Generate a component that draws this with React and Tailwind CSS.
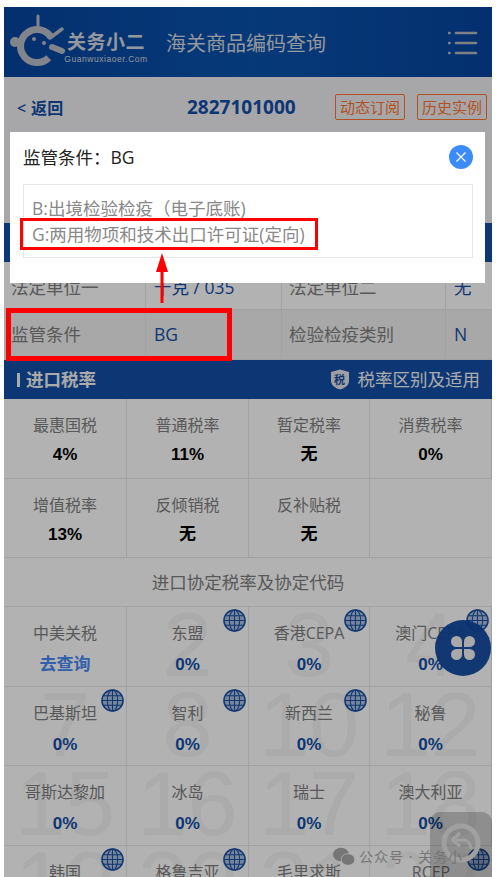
import React from "react";

const SANS = "font-['Open_Sans','Noto_Sans_CJK_SC',sans-serif]";

const BASE_ROW_1 = [
  { label: "最惠国税", value: "4%" },
  { label: "普通税率", value: "11%" },
  { label: "暂定税率", value: "无" },
  { label: "消费税率", value: "0%" },
];

const BASE_ROW_2 = [
  { label: "增值税率", value: "13%" },
  { label: "反倾销税", value: "无" },
  { label: "反补贴税", value: "无" },
  { label: "", value: "" },
];

const AGREEMENTS = [
  { label: "中美关税", value: "去查询", link: true },
  { label: "东盟", value: "0%", no: "2", globe: true },
  { label: "香港CEPA", value: "0%", no: "3", globe: true },
  { label: "澳门CEPA", value: "0%", no: "4", globe: true },
  { label: "巴基斯坦", value: "0%", no: "7", globe: true },
  { label: "智利", value: "0%", no: "8", globe: true },
  { label: "新西兰", value: "0%", no: "10", globe: true },
  { label: "秘鲁", value: "0%", no: "12" },
  { label: "哥斯达黎加", value: "0%", no: "15" },
  { label: "冰岛", value: "0%", no: "16" },
  { label: "瑞士", value: "0%", no: "17" },
  { label: "澳大利亚", value: "0%", no: "18" },
  { label: "韩国", value: "", no: "19", globe: true },
  { label: "格鲁吉亚", value: "", no: "20", globe: true },
  { label: "毛里求斯", value: "", no: "21" },
  { label: "RCEP", value: "", no: "22", globe: true },
];

function Logo() {
  return (
    <svg width="56" height="60" viewBox="0 0 56 60" className="shrink-0" fill="none">
      <path d="M41.3 25.7 A16.5 16.5 0 1 0 38.7 45.7" stroke="#b9bec7" strokeWidth="7" />
      <circle cx="5" cy="30" r="5" fill="#b9bec7" />
      <path d="M28 4 V16" stroke="#b9bec7" strokeWidth="3" strokeLinecap="round" />
      <path d="M40 26 L52 17" stroke="#b9bec7" strokeWidth="3.5" strokeLinecap="round" />
      <path d="M42 35 L52 39" stroke="#b9bec7" strokeWidth="6" strokeLinecap="round" />
      <circle cx="24" cy="27" r="2" fill="#b9bec7" />
      <circle cx="34" cy="31" r="2" fill="#b9bec7" />
    </svg>
  );
}

function MenuIcon() {
  return (
    <svg width="30" height="24" viewBox="0 0 30 24" fill="none" stroke="#b4b8c0" strokeWidth="2.6" strokeLinecap="round">
      <path d="M1 2h.6M8 2h20M1 12h.6M8 12h20M1 22h.6M8 22h20" />
    </svg>
  );
}

function Globe() {
  return (
    <svg width="23" height="23" viewBox="0 0 24 24" fill="#a9bfdf" stroke="#1a4fa3" className="absolute right-[2px] top-[2px]">
      <circle cx="12" cy="12" r="11" strokeWidth="1.6" />
      <g fill="none" strokeWidth="1.1">
        <ellipse cx="12" cy="12" rx="5.4" ry="11" />
        <path d="M12 1v22M1 12h22M2.6 7h18.8M2.6 17h18.8" />
      </g>
    </svg>
  );
}

function Shield() {
  return (
    <span className="relative flex h-[21px] w-[20px] items-center justify-center">
      <svg width="20" height="21" viewBox="0 0 20 21" className="absolute inset-0">
        <path d="M10 0.5 L19 3 V12 C19 16.5 14 19.5 10 20.5 C6 19.5 1 16.5 1 12 V3 Z" fill="#e2e4e8" />
      </svg>
      <span className="relative text-[11px] font-bold leading-none text-[#144fa7]">税</span>
    </span>
  );
}

function RateCell({ label, value }) {
  return (
    <div className="flex h-[79.5px] flex-col items-center border-r border-b border-[#e8e8e8] pt-[14px] last:border-r-0">
      <span className="text-[16px] leading-[24px] text-[#808080]">{label}</span>
      <span className="mt-[6px] font-['Liberation_Sans','Noto_Sans_CJK_SC',sans-serif] text-[17px] font-bold leading-[24px] text-black">{value}</span>
    </div>
  );
}

function AgreementCell({ item }) {
  return (
    <div className="relative flex h-[79.5px] flex-col items-center overflow-hidden border-r border-b border-[#e8e8e8] pt-[14px] last:border-r-0">
      {item.no && (
        <span className="absolute inset-x-0 top-[-7px] text-center font-['Liberation_Sans',sans-serif] text-[90px] leading-[90px] text-[#f5f5f5]">
          {item.no}
        </span>
      )}
      {item.globe && <Globe />}
      <span className="relative text-[16px] leading-[24px] text-[#808080]">{item.label}</span>
      <span
        className={`relative mt-[8px] font-['Liberation_Sans','Noto_Sans_CJK_SC',sans-serif] text-[17px] font-bold leading-[24px] ${
          item.link ? "text-[#4a8af4]" : "text-[#144fa7]"
        }`}
      >
        {item.value}
      </span>
    </div>
  );
}

function Row({ cells, className = "", height, inner = "" }) {
  return (
    <div className={`grid grid-cols-[142px_136px_164px_46px] border-b border-[#e8e8e8] text-[17.5px] ${height} ${className}`}>
      {cells.map((c, i) => (
        <div
          key={i}
          className={`flex items-center border-r border-[#e8e8e8] last:border-r-0 ${inner} ${i % 2 ? "pl-[8px] text-[#144fa7]" : "pl-[7px] text-[#808080]"}`}
        >
          {c}
        </div>
      ))}
    </div>
  );
}

export default function App() {
  return (
    <div className={`relative h-[877px] w-[497px] overflow-hidden bg-white pt-[7px] pl-[4px] pr-[5px] ${SANS}`}>
      <div className="w-[488px]">
        <div className="flex h-[70px] items-center bg-gradient-to-r from-[#0745a0] via-[#0a52ad] to-[#0745a0] pl-[6px] pr-[14px]">
          <Logo />
          <div className="mt-[12px] flex w-[80px] flex-col items-center text-[#d5d8de]">
            <span className="text-[19px] font-semibold leading-[22px] tracking-[0.5px]">关务小二</span>
            <span className="font-['Liberation_Sans',sans-serif] text-[8.5px] leading-[12px] tracking-[0.55px]">Guanwuxiaoer.Com</span>
          </div>
          <span className="ml-[20px] mt-[3px] text-[20px] text-[#d5d8de]">海关商品编码查询</span>
          <div className="ml-auto mt-[2px]">
            <MenuIcon />
          </div>
        </div>

        <div className="flex h-[60px] items-start bg-[#f0f0f2] pl-[13px] pr-[5px] pt-[17px]">
          <span className="w-[90px] text-[16px] font-semibold leading-[28px] tracking-[0.3px] text-[#144fa7]">&lt; 返回</span>
          <span className="ml-[80px] text-[19px] font-bold leading-[26px] text-[#144fa7]">2827101000</span>
          <span className="ml-auto flex h-[26px] w-[70px] items-center justify-center rounded-[2px] border border-[#ff7430] text-[15px] text-[#ff7430]">动态订阅</span>
          <span className="ml-[12px] flex h-[26px] w-[70px] items-center justify-center rounded-[2px] border border-[#ff7430] text-[15px] text-[#ff7430]">历史实例</span>
        </div>

        <div className="h-[86px] bg-[#f0f0f2]" />

        <div className="h-[39px] bg-[#144fa7]" />

        <Row cells={["法定单位一", "千克 / 035", "法定单位二", "无"]} height="h-[48px]" inner="pt-[4px]" className="bg-white" />
        <Row cells={["监管条件", "BG", "检验检疫类别", "N"]} height="h-[50px]" className="bg-[#f1f1f1]" />

        <div className="flex h-[39px] items-center bg-[#144fa7] pl-[13px] pr-[12px] text-[17.5px] text-[#f4f4f4]">
          <span className="mr-[6px] h-[14px] w-[3px] bg-[#f4f4f4]" />
          <span className="font-bold">进口税率</span>
          <span className="ml-auto flex items-center gap-[8px]">
            <Shield />
            税率区别及适用
          </span>
        </div>

        <div className="grid grid-cols-[123px_122px_121px_122px]">
          {BASE_ROW_1.map((c) => (
            <RateCell key={c.label} {...c} />
          ))}
          {BASE_ROW_2.map((c, i) => (
            <RateCell key={i} {...c} />
          ))}
        </div>

        <div className="flex h-[49px] items-center justify-center border-b border-[#e8e8e8] text-[17.5px] text-[#808080]">
          进口协定税率及协定代码
        </div>

        <div className="grid grid-cols-[123px_122px_121px_122px]">
          {AGREEMENTS.map((item) => (
            <AgreementCell key={item.label} item={item} />
          ))}
        </div>
      </div>

      {/* floating buttons under the mask */}
      <div className="absolute left-[435px] top-[620px] flex h-[56px] w-[56px] items-center justify-center rounded-full bg-[#0f48a0]/95">
        <svg width="26" height="26" viewBox="0 0 26 26" fill="#f2f2f2">
          <path d="M12 12H6.5A5.5 5.5 0 1 1 12 6.5ZM14 12V6.5A5.5 5.5 0 1 1 19.5 12ZM12 14V19.5A5.5 5.5 0 1 1 6.5 14ZM14 14H19.5A5.5 5.5 0 1 1 14 19.5Z" />
        </svg>
      </div>
      <div className="absolute left-[430px] top-[812px] flex h-[65px] w-[62px] items-start justify-center rounded-t-[10px] bg-black/20 pt-[11px]">
        <svg width="40" height="40" viewBox="0 0 40 40" fill="none" stroke="#e5e5e5" strokeWidth="5">
          <circle cx="20" cy="20" r="17" />
          <path d="M11 17 L19 10 M11 17 L19 23 M11 17 H22 C27 17 30 21 30 26" strokeWidth="3" />
        </svg>
      </div>

      {/* page mask */}
      <div className="absolute bottom-0 left-[4px] top-[7px] w-[488px] bg-black/30" />

      {/* dialog */}
      <div className="absolute left-[10px] top-[132px] h-[151px] w-[475px] bg-white pl-[13px] pr-[12px] pt-[12px]">
        <div className="flex h-[26px] items-center justify-between">
          <span className="text-[17.5px] leading-[26px] text-[#222]">监管条件：BG</span>
          <span className="flex h-[24px] w-[24px] items-center justify-center rounded-full bg-[#3b8bf8]">
            <svg width="12" height="12" viewBox="0 0 12 12" stroke="#fff" strokeWidth="1.2" fill="none">
              <path d="M1.5 1.5l9 9M10.5 1.5l-9 9" />
            </svg>
          </span>
        </div>
        <div className="mt-[14px] h-[74px] w-[450px] border border-[#e6e6e6] pl-[8px] pt-[10px] text-[17.5px] leading-[26px] text-[#888]">
          <div>B:出境检验检疫（电子底账)</div>
          <div>G:两用物项和技术出口许可证(定向)</div>
        </div>
      </div>

      {/* red annotations */}
      <div className="absolute left-[20px] top-[218px] h-[32px] w-[298px] border-[3px] border-[#ff0000]" />
      <div className="absolute left-[6px] top-[308px] h-[53px] w-[226px] border-[5px] border-[#ff0000]" />
      <svg width="14" height="52" viewBox="0 0 14 52" className="absolute left-[155px] top-[253px]">
        <path d="M7 0 L13 19 H8.5 V50 H5.5 V19 H1 Z" fill="#ff0000" />
      </svg>

      {/* wechat mark */}
      <div className="absolute left-[333px] top-[847px] flex items-center gap-[4px] text-[14px] leading-[20px] text-[#767676]">
        <svg width="22" height="20" viewBox="0 0 22 20" fill="#767676">
          <ellipse cx="8" cy="7.5" rx="8" ry="6.8" />
          <ellipse cx="15" cy="12.5" rx="6.8" ry="5.8" stroke="#b2b2b2" strokeWidth="0.8" />
        </svg>
        <span className="tracking-[1px]">公众号 · 关务小</span>
      </div>
    </div>
  );
}
